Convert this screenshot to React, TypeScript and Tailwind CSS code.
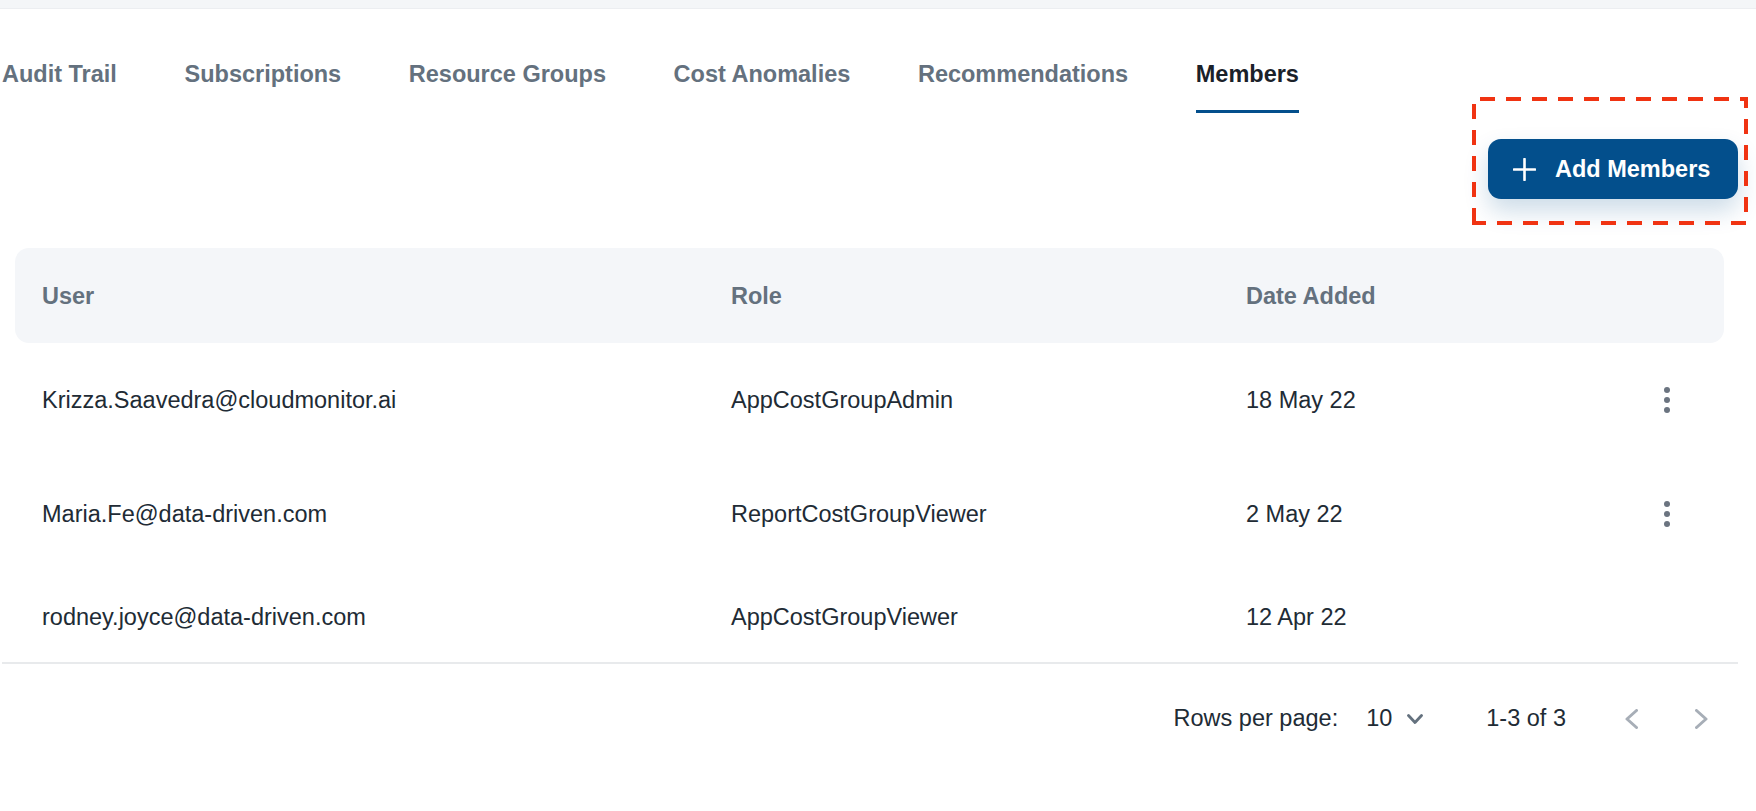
export default function App() {
  const tabs = ["Audit Trail", "Subscriptions", "Resource Groups", "Cost Anomalies", "Recommendations"];
  const rows = [
    { user: "Krizza.Saavedra@cloudmonitor.ai", role: "AppCostGroupAdmin", date: "18 May 22", menu: true, h: "h-[114px] pt-[2px]" },
    { user: "Maria.Fe@data-driven.com", role: "ReportCostGroupViewer", date: "2 May 22", menu: true, h: "h-[114px] pt-[2px]" },
    { user: "rodney.joyce@data-driven.com", role: "AppCostGroupViewer", date: "12 Apr 22", menu: false, h: "h-[91px] pt-[3px]" },
  ];
  const font = { fontFamily: '"Liberation Sans", Arial, sans-serif' };
  return (
    <div className="relative w-[1756px] h-[811px] overflow-hidden bg-white text-[#212b35]" style={font}>
      <div className="h-[9px] bg-[#f4f6f8] border-b border-[#eceef1]" />
      <div className="flex gap-[67.6px] pl-[2px] h-[104px]">
        {tabs.map((t) => (
          <div key={t} className="pt-[51px] text-[23.5px] leading-[28px] font-bold text-[#64717e]">{t}</div>
        ))}
        <div className="pt-[51px] text-[23.5px] leading-[28px] font-bold text-[#1a2129] border-b-[3px] border-[#034f8c] h-[104px]">Members</div>
      </div>
      <div className="flex justify-end pr-[18px] mt-[26px]">
        <button className="flex items-center w-[250px] h-[60px] pl-[25px] rounded-[13px] bg-[#034f8c] text-white font-bold text-[23.5px] shadow-[0_12px_24px_rgba(3,79,140,0.2)]">
          <svg width="23" height="23" viewBox="0 0 23 23" fill="none" stroke="white" strokeWidth="2.6" strokeLinecap="round">
            <path d="M11.5 1v21M1 11.5h21" />
          </svg>
          <span className="ml-[19px] pt-[2px]">Add Members</span>
        </button>
      </div>
      <div className="mt-[49px] ml-[15px] w-[1709px] h-[95px] pl-[27px] pt-[2px] grid grid-cols-[689px_515px_1fr] items-center rounded-[14px] bg-[#f4f6f9] text-[23.5px] font-bold text-[#64717e]">
        <div>User</div>
        <div>Role</div>
        <div>Date Added</div>
      </div>
      <div className="border-b-2 border-[#e8eaec] ml-[2px] w-[1736px]">
        {rows.map((r) => (
          <div key={r.user} className={`${r.h} pl-[40px] grid grid-cols-[689px_515px_1fr] items-center text-[23.5px]`}>
            <div>{r.user}</div>
            <div>{r.role}</div>
            <div className="relative">
              {r.date}
              {r.menu && (
                <svg className="absolute left-[417px] top-1/2 -translate-y-1/2 mt-[-1px]" width="8" height="28" viewBox="0 0 8 28" fill="#6b7480">
                  <circle cx="4" cy="4" r="3" />
                  <circle cx="4" cy="14" r="3" />
                  <circle cx="4" cy="24" r="3" />
                </svg>
              )}
            </div>
          </div>
        ))}
      </div>
      <div className="flex items-center justify-end h-[109px] pr-[48px] text-[23.5px]">
        <span>Rows per page:</span>
        <span className="ml-[28px]">10</span>
        <svg className="ml-[15px]" width="16" height="10" viewBox="0 0 16 10" fill="none" stroke="#64717e" strokeWidth="2.8" strokeLinecap="round" strokeLinejoin="round">
          <path d="M1.5 1.5 8 8.5l6.5-7" />
        </svg>
        <span className="ml-[63px]">1-3 of 3</span>
        <svg className="ml-[59px]" width="13" height="20" viewBox="0 0 13 20" fill="none" stroke="#a7aeb7" strokeWidth="3" strokeLinecap="round" strokeLinejoin="round">
          <path d="M11.5 1.5 2 10l9.5 8.5" />
        </svg>
        <svg className="ml-[57px]" width="13" height="20" viewBox="0 0 13 20" fill="none" stroke="#a7aeb7" strokeWidth="3" strokeLinecap="round" strokeLinejoin="round">
          <path d="M1.5 1.5 11 10l-9.5 8.5" />
        </svg>
      </div>
      <svg className="absolute left-[1472px] top-[97px]" width="276" height="128" viewBox="0 0 276 128" fill="none" stroke="#f03312" strokeWidth="4">
        <path d="M2 2H274V126H0" strokeDasharray="15 11" strokeDashoffset="20" />
        <path d="M2 7V128" strokeDasharray="15 11" />
      </svg>
    </div>
  );
}
